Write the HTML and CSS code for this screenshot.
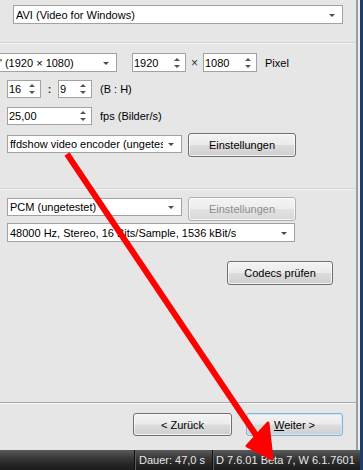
FILE: index.html
```html
<!DOCTYPE html>
<html lang="de">
<head>
<meta charset="utf-8">
<title>Export</title>
<link rel="stylesheet" href="styles.css">
</head>
<body>
<div class="window">
  <div class="main">
    <div class="upper">
      <div class="content">
        <div class="panel">
          <div class="row r-format">
            <div class="combo w-format"><span class="val">AVI (Video for Windows)</span><i class="dd"></i></div>
          </div>
          <div class="group-line"></div>
          <div class="row r-res">
            <div class="combo w-preset"><span class="val">" (1920 × 1080)</span><i class="dd"></i></div>
            <div class="spin w-res first-gap"><span class="val">1920</span><span class="arrows"><i class="up"></i><i class="down"></i></span></div>
            <span class="sep w-x">×</span>
            <div class="spin w-res"><span class="val">1080</span><span class="arrows"><i class="up"></i><i class="down"></i></span></div>
            <span class="label">Pixel</span>
          </div>
          <div class="row r-aspect">
            <div class="spin w-ratio indent"><span class="val">16</span><span class="arrows"><i class="up"></i><i class="down"></i></span></div>
            <span class="sep w-colon">:</span>
            <div class="spin w-ratio"><span class="val">9</span><span class="arrows"><i class="up"></i><i class="down"></i></span></div>
            <span class="label">(B : H)</span>
          </div>
          <div class="row r-fps">
            <div class="spin w-fps indent"><span class="val">25,00</span><span class="arrows"><i class="up"></i><i class="down"></i></span></div>
            <span class="label">fps (Bilder/s)</span>
          </div>
          <div class="row r-codec">
            <div class="combo w-codec indent"><span class="val">ffdshow video encoder (ungetestet)</span><i class="dd"></i></div>
            <button class="btn w-settings">Einstellungen</button>
          </div>
          <div class="group-line gl-audio"></div>
          <div class="row r-audio">
            <div class="combo w-codec indent"><span class="val">PCM (ungetestet)</span><i class="dd"></i></div>
            <button class="btn w-settings" disabled>Einstellungen</button>
          </div>
          <div class="row r-audiofmt">
            <div class="combo w-afmt indent"><span class="val">48000 Hz, Stereo, 16 Bits/Sample, 1536 kBit/s</span><i class="dd"></i></div>
          </div>
          <div class="row r-check">
            <button class="btn w-check">Codecs prüfen</button>
          </div>
        </div>
        <div class="nav">
          <button class="btn w-back">&lt; Zurück</button>
          <button class="btn btn-default w-next"><u>W</u>eiter &gt;</button>
        </div>
      </div>
      <div class="edge"></div>
    </div>
    <div class="status">
      <div class="st-empty"></div>
      <div class="st-cell st-dur">Dauer: 47,0 s</div>
      <div class="st-cell st-ver">D 7.6.01 Beta 7, W 6.1.7601</div>
    </div>
  </div>
  <div class="frame"></div>
  <svg class="arrow" width="363" height="470" viewBox="0 0 363 470" aria-hidden="true">
    <line x1="67" y1="154" x2="266" y2="450" stroke="#ff0000" stroke-width="6"/>
    <polygon points="247,446 272,459 268,423" fill="#ff0000" stroke="#ff0000" stroke-width="3" stroke-linejoin="round"/>
  </svg>
</div>
</body>
</html>
```

FILE: styles.css
```css
* { box-sizing: border-box; }

html, body {
  margin: 0;
  padding: 0;
}

body {
  width: 363px;
  height: 470px;
  overflow: hidden;
  font-family: "Liberation Sans", Arial, sans-serif;
  font-size: 11px;
  color: #000;
  background: #e6e6e6;
}

.window {
  position: relative;
  display: flex;
  width: 363px;
  height: 470px;
}

.main {
  width: 360px;
  display: flex;
  flex-direction: column;
}

.upper {
  display: flex;
  height: 450px;
}

.content {
  width: 356px;
  display: flex;
  flex-direction: column;
  overflow: hidden;
}

.edge {
  width: 4px;
  border-left: 2px solid #9c9c9c;
  background: #ededed;
}

.frame {
  width: 3px;
  background: #1f3d68;
}

/* panel */
.panel {
  height: 403px;
  border-bottom: 1px solid #a7a7a7;
  background: #e6e6e6;
  display: flex;
  flex-direction: column;
}

.row {
  display: flex;
  align-items: center;
  flex: none;
}

.group-line {
  flex: none;
  height: 2px;
  margin-top: 18px;
  border-top: 1px solid #d3d3d3;
  border-bottom: 1px solid #f3f3f3;
}

.gl-audio { margin-top: 31px; }

.r-format { margin-top: 5px; height: 19px; }
.r-res { margin-top: 9px; height: 19px; }
.r-aspect { margin-top: 8px; height: 18px; }
.r-fps { margin-top: 9px; height: 18px; }
.r-codec { margin-top: 8px; height: 24px; }
.r-audio { margin-top: 7px; height: 24px; }
.r-audiofmt { margin-top: 2px; height: 19px; }
.r-check { margin-top: 19px; height: 24px; }

.indent { margin-left: 7px; }

/* combo box */
.combo {
  position: relative;
  display: flex;
  align-items: center;
  height: 19px;
  border: 1px solid #a2a2a2;
  background: #fff;
  padding-left: 2px;
  padding-right: 18px;
  overflow: hidden;
  white-space: nowrap;
}

.combo .val {
  overflow: hidden;
  white-space: nowrap;
}

.dd {
  position: absolute;
  right: 7px;
  top: 50%;
  margin-top: -1px;
  width: 0;
  height: 0;
  border-left: 3px solid transparent;
  border-right: 3px solid transparent;
  border-top: 3px solid #4a4a4a;
}

.w-format { margin-left: 13px; width: 330px; }
.w-preset { margin-left: -3px; width: 120px; padding-left: 0; }
.w-codec { width: 175px; height: 18px; align-self: flex-start; }
.r-codec .w-codec { margin-top: 2px; }
.r-audio .w-codec { margin-top: 1px; }
.w-afmt { width: 288px; }

/* spin box */
.spin {
  display: flex;
  align-items: center;
  height: 100%;
  border: 1px solid #a2a2a2;
  background: #fff;
  padding-left: 1px;
  padding-right: 5px;
}

.spin .val { flex: 1; }

.arrows {
  display: flex;
  flex-direction: column;
  align-items: center;
  gap: 4px;
}

.up, .down {
  display: block;
  width: 0;
  height: 0;
  border-left: 3px solid transparent;
  border-right: 3px solid transparent;
}

.up { border-bottom: 3px solid #555; }
.down { border-top: 3px solid #555; }

.w-res { width: 54px; }
.first-gap { margin-left: 15px; }
.w-ratio { width: 34px; }
.w-fps { width: 85px; }

.sep {
  display: flex;
  justify-content: center;
  color: #333;
}

.w-x { width: 17px; font-size: 12px; }
.w-colon { width: 17px; font-weight: bold; }

.label { margin-left: 8px; white-space: nowrap; }

/* buttons */
.btn {
  font-family: inherit;
  font-size: 11px;
  color: #000;
  height: 24px;
  padding: 0;
  border: 1px solid #707070;
  border-radius: 3px;
  background: linear-gradient(to bottom, #f3f3f3 0%, #ebebeb 48%, #dcdcdc 52%, #cfcfcf 100%);
  box-shadow: inset 0 0 0 1px rgba(255, 255, 255, 0.7);
  white-space: nowrap;
}

.btn:disabled {
  color: #8e8e8e;
  border-color: #adb2b5;
  background: linear-gradient(to bottom, #f4f4f4 0%, #ededed 48%, #e2e2e2 52%, #d9d9d9 100%);
}

.btn-default {
  border-color: #7eb4dc;
  box-shadow: inset 0 0 0 1px #cfe8f8;
}

.w-settings { margin-left: 6px; width: 108px; }
.w-check { margin-left: 227px; width: 106px; }

/* nav */
.nav {
  flex: none;
  height: 46px;
  border-top: 1px solid #f6f6f6;
  padding-top: 9px;
  display: flex;
  align-items: flex-start;
}

.w-back { margin-left: 133px; width: 99px; height: 23px; }
.w-next { margin-left: 14px; width: 97px; height: 23px; }

/* status bar */
.status {
  flex: none;
  height: 20px;
  display: flex;
  background: linear-gradient(to bottom, #5b5b5b 0%, #3c3c3c 35%, #262626 70%, #1c1c1c 100%);
  color: #e6e6e6;
  font-size: 11px;
}

.st-empty { width: 134px; }

.st-cell {
  display: flex;
  align-items: center;
  border-left: 1px solid #111;
  box-shadow: inset 1px 0 0 #5a5a5a;
  white-space: nowrap;
}

.st-dur { width: 78px; padding-left: 4px; }
.st-ver { flex: 1; padding-left: 3px; }

/* annotation overlay */
.arrow {
  position: absolute;
  left: 0;
  top: 0;
  pointer-events: none;
}
```
